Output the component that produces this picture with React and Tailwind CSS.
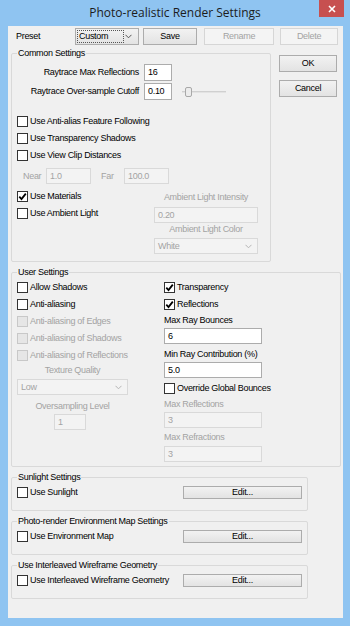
import React from "react";

function Box({ checked, disabled }) {
  return (
    <span
      className={`w-[11px] h-[11px] shrink-0 border flex items-center justify-center ${
        disabled ? "border-[#c8c8c8] bg-[#e6e6e6]" : "border-[#333333] bg-white"
      }`}
    >
      {checked && (
        <svg width="9" height="9" viewBox="0 0 9 9">
          <path d="M1.3 4.6 L3.5 7 L7.8 1.6" fill="none" stroke="#000" strokeWidth="1.8" />
        </svg>
      )}
    </span>
  );
}

function Check({ label, checked, disabled, className = "" }) {
  return (
    <div className={`flex items-center h-[17px] ${className}`}>
      <Box checked={checked} disabled={disabled} />
      <span className={`ml-[2px] whitespace-nowrap ${disabled ? "text-[#a3a3a3]" : "text-black"}`}>{label}</span>
    </div>
  );
}

function Btn({ children, className = "", disabled }) {
  return (
    <div
      className={`flex items-center justify-center border shrink-0 ${
        disabled
          ? "border-[#d6d6d6] bg-[#f4f4f4] text-[#a3a3a3]"
          : "border-[#acacac] bg-linear-to-b from-[#f2f2f2] to-[#e3e3e3] text-black"
      } ${className}`}
    >
      {children}
    </div>
  );
}

function Field({ value, className = "", disabled }) {
  return (
    <div
      className={`flex items-center px-[3px] border shrink-0 ${
        disabled ? "border-[#d9d9d9] bg-[#f3f3f3] text-[#a3a3a3]" : "border-[#acacac] bg-white text-black"
      } ${className}`}
    >
      {value}
    </div>
  );
}

function Chevron({ color }) {
  return (
    <svg width="7" height="5" viewBox="0 0 7 5">
      <path d="M0.5 0.8 L3.5 3.8 L6.5 0.8" fill="none" stroke={color} strokeWidth="1" />
    </svg>
  );
}

function DisSelect({ value, className = "" }) {
  return (
    <div className={`flex items-center justify-between pl-[3px] pr-[5px] border border-[#d9d9d9] bg-[#f3f3f3] text-[#a3a3a3] shrink-0 ${className}`}>
      <span>{value}</span>
      <Chevron color="#b5b5b5" />
    </div>
  );
}

function Group({ title, className = "", children }) {
  return (
    <fieldset className={`border border-[#d9d9d9] rounded-[2px] ${className}`}>
      <legend className="ml-[5px] px-[1px] leading-[11px] text-black">{title}</legend>
      {children}
    </fieldset>
  );
}

function Label({ children, className = "" }) {
  return <div className={`h-[12px] leading-[12px] whitespace-nowrap ${className}`}>{children}</div>;
}

export default function App() {
  return (
    <div className="w-[350px] h-[626px] bg-[#8fc4f1] flex flex-col font-['Liberation_Sans',Arial,sans-serif] text-[9px] leading-[11px] tracking-[-0.3px] text-black">
      <div className="relative h-[26px] shrink-0 flex items-center justify-center pb-[1px]">
        <span className="font-['Open_Sans',sans-serif] text-[12px] tracking-normal text-[#1c1c1c]">
          Photo-realistic Render Settings
        </span>
        <div className="absolute right-[6px] top-0 w-[25px] h-[17px] bg-[#c75050] flex items-center justify-center">
          <svg width="8" height="8" viewBox="0 0 8 8">
            <path d="M1 1 L7 7 M7 1 L1 7" stroke="#fff" strokeWidth="1.6" />
          </svg>
        </div>
      </div>

      <div className="ml-[8px] w-[335px] h-[592px] bg-[#f0f0f0] flex flex-col">
        {/* Preset row */}
        <div className="mt-[2px] h-[17px] flex items-center">
          <span className="ml-[8px] w-[59px]">Preset</span>
          <div className="w-[64px] h-[17px] border border-[#acacac] bg-linear-to-b from-[#f2f2f2] to-[#e3e3e3] flex items-center pl-[1px] pr-[6px] justify-between">
            <span className="h-[13px] w-[47px] border border-dotted border-[#555] flex items-center pl-[1px]">Custom</span>
            <Chevron color="#555" />
          </div>
          <Btn className="ml-[4px] w-[54px] h-[17px]">Save</Btn>
          <Btn disabled className="ml-[7px] w-[70px] h-[17px]">Rename</Btn>
          <Btn disabled className="ml-[6px] w-[58px] h-[17px]">Delete</Btn>
        </div>

        {/* Common + OK/Cancel */}
        <div className="flex mt-[3px]">
          <Group title="Common Settings" className="ml-[3px] w-[260px] pt-[5px] pb-[7px]">
            <div className="flex items-center h-[17px]">
              <span className="w-[127px] text-right whitespace-nowrap">Raytrace Max Reflections</span>
              <Field value="16" className="ml-[5px] w-[28px] h-[17px]" />
            </div>
            <div className="flex items-center h-[17px] mt-[2px]">
              <span className="w-[127px] text-right whitespace-nowrap">Raytrace Over-sample Cutoff</span>
              <Field value="0.10" className="ml-[5px] w-[28px] h-[17px]" />
              <div className="ml-[10px] w-[44px] h-[10px] relative flex items-center">
                <div className="w-full h-[2px] bg-[#e3e3e3] border-t border-[#d0d0d0]" />
                <div className="absolute left-[3px] top-0 w-[7px] h-[10px] rounded-[2px] border border-[#a8a8a8] bg-[#ececec]" />
              </div>
            </div>
            <div className="mt-[13px] pl-[5px]">
              <Check label="Use Anti-alias Feature Following" />
              <Check label="Use Transparency Shadows" />
              <Check label="Use View Clip Distances" />
            </div>
            <div className="mt-[4px] h-[16px] flex items-center text-[#a3a3a3]">
              <span className="ml-[11px] w-[23px]">Near</span>
              <Field disabled value="1.0" className="w-[45px] h-[16px]" />
              <span className="ml-[10px] w-[23px]">Far</span>
              <Field disabled value="100.0" className="w-[45px] h-[16px]" />
            </div>
            <div className="flex mt-[4px]">
              <div className="pl-[5px] w-[142px]">
                <Check label="Use Materials" checked />
                <Check label="Use Ambient Light" />
              </div>
              <div className="w-[104px] mt-[3px] flex flex-col items-center text-[#a3a3a3]">
                <Label>Ambient Light Intensity</Label>
                <Field disabled value="0.20" className="mt-[4px] w-[104px] h-[16px]" />
                <Label>Ambient Light Color</Label>
                <DisSelect value="White" className="mt-[3px] w-[104px] h-[16px]" />
              </div>
            </div>
          </Group>
          <div className="ml-[8px] mt-[7px] flex flex-col">
            <Btn className="w-[58px] h-[17px]">OK</Btn>
            <Btn className="mt-[8px] w-[58px] h-[17px]">Cancel</Btn>
          </div>
        </div>

        {/* User Settings */}
        <Group title="User Settings" className="mt-[5px] ml-[3px] w-[330px] pt-[1px] pb-[4px]">
          <div className="flex pl-[5px]">
            <div className="w-[147px] flex flex-col">
              <Check label="Allow Shadows" />
              <Check label="Anti-aliasing" />
              <Check label="Anti-aliasing of Edges" disabled />
              <Check label="Anti-aliasing of Shadows" disabled />
              <Check label="Anti-aliasing of Reflections" disabled />
              <Label className="w-[111px] text-center text-[#a3a3a3]">Texture Quality</Label>
              <DisSelect value="Low" className="mt-[3px] w-[111px] h-[16px]" />
              <Label className="mt-[5px] w-[111px] text-center text-[#a3a3a3]">Oversampling Level</Label>
              <Field disabled value="1" className="mt-[2px] ml-[37px] w-[32px] h-[16px]" />
            </div>
            <div className="w-[98px] flex flex-col">
              <Check label="Transparency" checked />
              <Check label="Reflections" checked />
              <Label className="mt-[1px]">Max Ray Bounces</Label>
              <Field value="6" className="mt-[2px] w-[98px] h-[16px]" />
              <Label className="mt-[4px]">Min Ray Contribution (%)</Label>
              <Field value="5.0" className="mt-[2px] w-[98px] h-[16px]" />
              <Check label="Override Global Bounces" className="mt-[2px]" />
              <Label className="mt-[1px] text-[#a3a3a3]">Max Reflections</Label>
              <Field disabled value="3" className="mt-[2px] w-[98px] h-[16px]" />
              <Label className="mt-[3px] text-[#a3a3a3]">Max Refractions</Label>
              <Field disabled value="3" className="mt-[3px] w-[98px] h-[16px]" />
            </div>
          </div>
        </Group>

        {[
          ["Sunlight Settings", "Use Sunlight"],
          ["Photo-render Environment Map Settings", "Use Environment Map"],
          ["Use Interleaved Wireframe Geometry", "Use Interleaved Wireframe Geometry"],
        ].map(([title, label]) => (
          <Group key={title} title={title} className="mt-[5px] ml-[3px] w-[297px] pt-[1px] pb-[10px]">
            <div className="flex items-center h-[16px] pl-[5px]">
              <Check label={label} className="w-[166px]" />
              <Btn className="w-[119px] h-[13px]">Edit...</Btn>
            </div>
          </Group>
        ))}
      </div>
    </div>
  );
}
